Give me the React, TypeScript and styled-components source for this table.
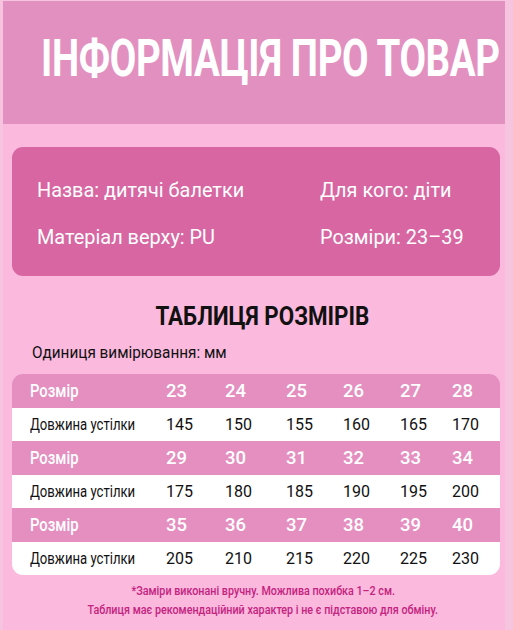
import { createGlobalStyle } from 'styled-components';
import styled from 'styled-components';

const GlobalStyle = createGlobalStyle`
  html, body {
    margin: 0;
    padding: 0;
    background: #f6c4df;
  }
  body {
    font-family: Roboto, "Noto Sans", sans-serif;
  }
`;

const Page = styled.div`
  width: 502px;
  height: 629px;
  margin: 1px 0 0 3px;
  background: #fbb9de;
  display: flex;
  flex-direction: column;
  overflow: hidden;
`;

const Header = styled.header`
  height: 123px;
  box-sizing: border-box;
  padding: 0 0 7px 38px;
  background: #e290bf;
  display: flex;
  align-items: center;
`;

// the reference uses a narrow face; squeeze the text to its width
const Narrow = styled.span<{ $sx: number; $origin?: string }>`
  display: inline-block;
  white-space: nowrap;
  transform: scaleX(${(p) => p.$sx});
  transform-origin: ${(p) => p.$origin || 'left'} center;
`;

const Title = styled.h1`
  margin: 0;
  color: #fff;
  font-weight: 700;
  font-size: 52px;
  line-height: 60px;
  letter-spacing: -0.5px;
  white-space: nowrap;
`;

const Body = styled.main`
  padding: 23px 5px 0 9px;
  display: flex;
  flex-direction: column;
`;

const InfoCard = styled.section`
  background: #d766a2;
  border-radius: 11px;
  height: 129px;
  padding: 30px 0 0 25px;
  box-sizing: border-box;
  display: grid;
  grid-template-columns: 283px 1fr;
  row-gap: 21px;
  align-content: start;
`;

const InfoItem = styled.div`
  color: #fff;
  font-size: 20.5px;
  line-height: 26px;
  white-space: nowrap;
`;

const TableTitle = styled.h2`
  margin: 25px 0 0;
  text-align: center;
  padding-left: 12px;
  font-size: 26px;
  font-weight: 700;
  color: #111;
  line-height: 30px;
`;

const Unit = styled.div`
  margin: 11px 0 0 20px;
  font-size: 17px;
  color: #111;
  line-height: 20px;
`;

const Table = styled.div`
  margin-top: 12px;
  border-radius: 11px;
  overflow: hidden;
  display: flex;
  flex-direction: column;
`;

const Row = styled.div<{ $head?: boolean }>`
  display: grid;
  grid-template-columns: 136px 59px 61px 57px 57px 52px 1fr;
  align-items: center;
  height: 33.5px;
  padding-left: 18px;
  background: ${(p) => (p.$head ? '#e48fbf' : '#fff')};
  color: ${(p) => (p.$head ? '#fff' : '#111')};
  font-size: ${(p) => (p.$head ? '18.5px' : '16px')};
  font-weight: ${(p) => (p.$head ? 500 : 400)};
  white-space: nowrap;
`;

const Notes = styled.footer`
  margin-top: 6px;
  text-align: center;
  padding-left: 14px;
  color: #c4237f;
  font-size: 12.5px;
  font-weight: 500;
  line-height: 19px;
`;

const info = [
  'Назва: дитячі балетки',
  'Для кого: діти',
  'Матеріал верху: PU',
  'Розміри: 23–39',
];

const groups = [
  { sizes: [23, 24, 25, 26, 27, 28], lengths: [145, 150, 155, 160, 165, 170] },
  { sizes: [29, 30, 31, 32, 33, 34], lengths: [175, 180, 185, 190, 195, 200] },
  { sizes: [35, 36, 37, 38, 39, 40], lengths: [205, 210, 215, 220, 225, 230] },
];

export default function App() {
  return (
    <>
      <GlobalStyle />
      <Page>
        <Header>
          <Title>
            <Narrow $sx={0.74}>ІНФОРМАЦІЯ ПРО ТОВАР</Narrow>
          </Title>
        </Header>
        <Body>
          <InfoCard>
            {info.map((t) => (
              <InfoItem key={t}>
                <Narrow $sx={0.97}>{t}</Narrow>
              </InfoItem>
            ))}
          </InfoCard>
          <TableTitle>
            <Narrow $sx={0.86} $origin="center">ТАБЛИЦЯ РОЗМІРІВ</Narrow>
          </TableTitle>
          <Unit>
            <Narrow $sx={0.9}>Одиниця вимірювання: мм</Narrow>
          </Unit>
          <Table>
            {groups.map((g, i) => (
              <div key={i}>
                <Row $head>
                  <Narrow $sx={0.8}>Розмір</Narrow>
                  {g.sizes.map((s) => (
                    <span key={s}>{s}</span>
                  ))}
                </Row>
                <Row>
                  <Narrow $sx={0.82}>Довжина устілки</Narrow>
                  {g.lengths.map((l) => (
                    <span key={l}>{l}</span>
                  ))}
                </Row>
              </div>
            ))}
          </Table>
          <Notes>
            <Narrow $sx={0.86} $origin="center">
              *Заміри виконані вручну. Можлива похибка 1–2 см.
            </Narrow>
            <br />
            <Narrow $sx={0.86} $origin="center">
              Таблиця має рекомендаційний характер і не є підставою для обміну.
            </Narrow>
          </Notes>
        </Body>
      </Page>
    </>
  );
}
